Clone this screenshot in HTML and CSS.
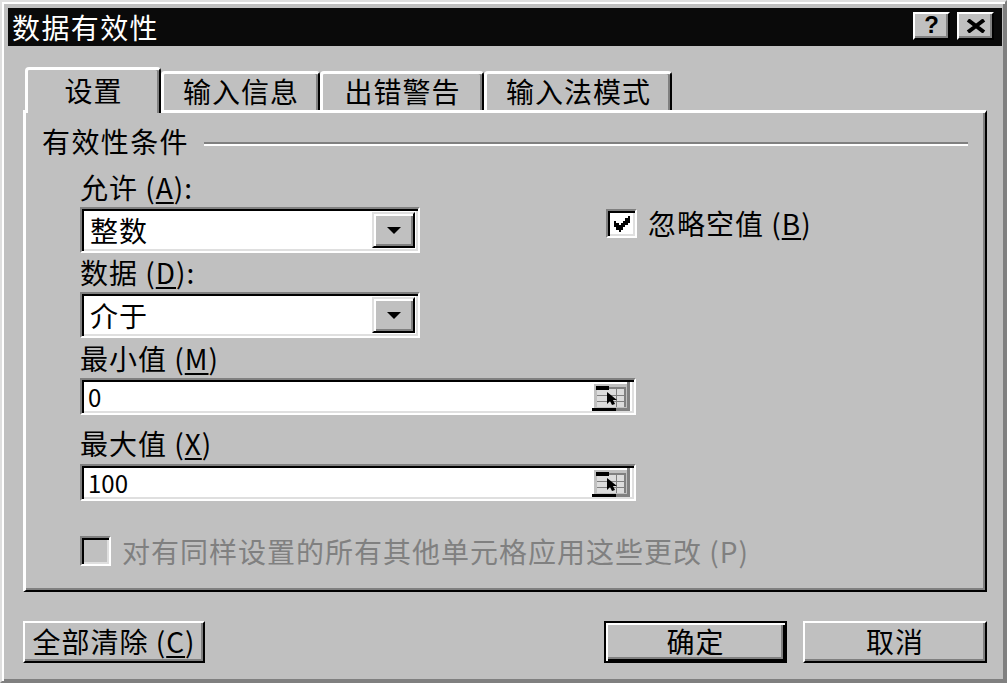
FILE: index.html
```html
<!DOCTYPE html>
<html lang="zh-CN">
<head>
<meta charset="utf-8">
<title>数据有效性</title>
<link rel="stylesheet" href="styles.css">
</head>
<body>
<div class="window">
  <div class="titlebar">
    <span class="title">数据有效性</span>
    <div class="tb-buttons">
      <span class="tb-btn help">?</span>
      <span class="tb-btn close">
        <svg width="22" height="14" viewBox="0 0 22 14"><path d="M3 1 L19 13 M19 1 L3 13" stroke="#000" stroke-width="4" fill="none"/></svg>
      </span>
    </div>
  </div>
  <div class="client">
    <div class="tabs">
      <div class="tab active t1">设置</div>
      <div class="tab t2">输入信息</div>
      <div class="tab t3">出错警告</div>
      <div class="tab t4">输入法模式</div>
    </div>
    <div class="panel">
      <div class="group-head">
        <span class="group-label">有效性条件</span>
        <span class="etch"></span>
      </div>
      <div class="fields">
        <div class="label l1">允许 (<u>A</u>):</div>
        <div class="row r1">
          <div class="combo">
            <span class="combo-text">整数</span>
            <span class="drop"><i class="tri"></i></span>
          </div>
          <div class="check ignore">
            <span class="box">
              <svg width="18" height="16" viewBox="0 0 7 7" shape-rendering="crispEdges"><path d="M6 0h1v1h-1z M5 1h2v1h-2z M0 2h1v1h-1z M4 2h3v1h-3z M0 3h2v1h-2z M3 3h3v1h-3z M0 4h5v1h-5z M1 5h3v1h-3z M2 6h1v1h-1z" fill="#000"/></svg>
            </span>
            <span class="check-text">忽略空值 (<u>B</u>)</span>
          </div>
        </div>
        <div class="label l2">数据 (<u>D</u>):</div>
        <div class="row r2">
          <div class="combo">
            <span class="combo-text">介于</span>
            <span class="drop"><i class="tri"></i></span>
          </div>
        </div>
        <div class="label l3">最小值 (<u>M</u>)</div>
        <div class="field f1">
          <span class="field-text">0</span>
          <span class="ref">
            <svg width="38" height="29" viewBox="0 0 38 29">
              <rect x="0" y="0" width="38" height="29" fill="#c0c0c0"/>
              <rect x="0" y="0" width="38" height="2" fill="#fff"/>
              <rect x="0" y="0" width="2" height="29" fill="#fff"/>
              <rect x="5" y="5" width="29" height="20" fill="#dcdcdc"/>
              <rect x="16" y="5" width="18" height="2" fill="#808080"/>
              <rect x="5" y="13" width="29" height="1" fill="#808080"/>
              <rect x="5" y="19" width="29" height="1" fill="#808080"/>
              <rect x="24" y="5" width="1" height="20" fill="#808080"/>
              <rect x="32" y="5" width="2" height="20" fill="#808080"/>
              <rect x="4" y="4" width="13" height="4" fill="#000"/>
              <path d="M15 10 L15 22 L18 19 L20 23 L23 22 L21 18 L25 18 Z" fill="#000"/>
              <rect x="0" y="26" width="24" height="3" fill="#000"/>
              <rect x="24" y="26" width="14" height="3" fill="#808080"/>
              <rect x="35" y="0" width="3" height="29" fill="#808080"/>
            </svg>
          </span>
        </div>
        <div class="label l4">最大值 (<u>X</u>)</div>
        <div class="field f2">
          <span class="field-text">100</span>
          <span class="ref">
            <svg width="38" height="29" viewBox="0 0 38 29">
              <rect x="0" y="0" width="38" height="29" fill="#c0c0c0"/>
              <rect x="0" y="0" width="38" height="2" fill="#fff"/>
              <rect x="0" y="0" width="2" height="29" fill="#fff"/>
              <rect x="5" y="5" width="29" height="20" fill="#dcdcdc"/>
              <rect x="16" y="5" width="18" height="2" fill="#808080"/>
              <rect x="5" y="13" width="29" height="1" fill="#808080"/>
              <rect x="5" y="19" width="29" height="1" fill="#808080"/>
              <rect x="24" y="5" width="1" height="20" fill="#808080"/>
              <rect x="32" y="5" width="2" height="20" fill="#808080"/>
              <rect x="4" y="4" width="13" height="4" fill="#000"/>
              <path d="M15 10 L15 22 L18 19 L20 23 L23 22 L21 18 L25 18 Z" fill="#000"/>
              <rect x="0" y="26" width="24" height="3" fill="#000"/>
              <rect x="24" y="26" width="14" height="3" fill="#808080"/>
              <rect x="35" y="0" width="3" height="29" fill="#808080"/>
            </svg>
          </span>
        </div>
        <div class="check apply-all">
          <span class="box disabled"></span>
          <span class="check-text disabled-text">对有同样设置的所有其他单元格应用这些更改 (P)</span>
        </div>
      </div>
    </div>
    <div class="buttons">
      <button class="btn clear">全部清除 (<u>C</u>)</button>
      <div class="btn-pair">
        <button class="btn ok">确定</button>
        <button class="btn cancel">取消</button>
      </div>
    </div>
  </div>
</div>
</body>
</html>
```
FILE: styles.css
```css
* { box-sizing: border-box; }
html, body { margin: 0; padding: 0; }
body {
  background: #c0c0c0;
  font-family: "Noto Sans CJK SC", "Noto Sans", sans-serif;
  font-size: 28px;
  color: #000;
}
u { text-decoration-thickness: 2px; text-underline-offset: 3px; }

.window {
  width: 1007px;
  height: 683px;
  background: #c0c0c0;
  border: 2px solid;
  border-color: #dfdfdf #808080 #808080 #dfdfdf;
  box-shadow: inset 2px 2px #fff, inset -2px -2px #808080;
  padding: 6px 3px 0 6px;
}

.titlebar {
  height: 38px;
  background: #0a0a0a;
  display: flex;
  justify-content: space-between;
  align-items: flex-start;
  padding-left: 4px;
}
.title {
  color: #fff;
  line-height: 38px;
  letter-spacing: 1.4px;
}
.tb-buttons {
  display: flex;
  gap: 7px;
  padding-right: 8px;
  margin-top: 4px;
}
.tb-btn {
  width: 37px;
  height: 28px;
  background: #c0c0c0;
  border: 2px solid;
  border-color: #fff #000 #000 #fff;
  box-shadow: inset -2px -2px #808080;
  display: flex;
  align-items: center;
  justify-content: center;
}
.help {
  font-family: "Liberation Sans", Arial, sans-serif;
  font-weight: bold;
  font-size: 24px;
  line-height: 1;
  padding-bottom: 2px;
}

.client { margin: 0 15px; }

.tabs {
  display: flex;
  align-items: flex-end;
  margin-top: 21px;
  padding-left: 2px;
  height: 43px;
}
.tab {
  height: 39px;
  border-top: 3px solid #fff;
  border-left: 3px solid #fff;
  border-right: 2px solid #000;
  box-shadow: inset -2px 0 #808080;
  border-radius: 4px 4px 0 0;
  display: flex;
  align-items: center;
  justify-content: center;
  letter-spacing: 1px;
  padding-bottom: 2px;
  background: #c0c0c0;
}
.tab.active {
  height: 46px;
  margin-bottom: -3px;
  z-index: 1;
  padding-bottom: 4px;
}
.t1 { width: 136px; }
.t2 { width: 159px; }
.t3 { width: 164px; }
.t4 { width: 188px; }

.panel {
  height: 482px;
  border-style: solid;
  border-width: 3px 2px 2px 3px;
  border-color: #fff #000 #000 #fff;
  box-shadow: inset -2px -2px #808080;
  padding: 12px 15px 0 16px;
}

.group-head {
  display: flex;
  align-items: center;
  height: 32px;
}
.group-label { line-height: 32px; letter-spacing: 1.4px; }
.etch {
  flex: 1;
  height: 4px;
  border-top: 2px solid #808080;
  border-bottom: 2px solid #fff;
  margin-left: 15px;
  margin-top: 6px;
  margin-right: 2px;
}

.fields {
  display: flex;
  flex-direction: column;
  align-items: flex-start;
  padding-left: 38px;
}
.label { line-height: 32px; height: 32px; letter-spacing: 1px; }
.l1 { margin-top: 14px; }
.r1 { margin-top: 4px; }
.l2 { margin-top: 3px; }
.r2 { margin-top: 4px; }
.l3 { margin-top: 4px; }
.f1 { margin-top: 4px; }
.l4 { margin-top: 12px; }
.f2 { margin-top: 5px; }

.row { display: flex; align-items: flex-start; }

.combo, .field {
  background: #fff;
  border: 2px solid;
  border-color: #808080 #fff #fff #808080;
  box-shadow: inset 2px 2px #000, inset -2px -2px #dfdfdf;
  display: flex;
  align-items: center;
}
.combo {
  width: 340px;
  height: 46px;
  padding: 3px 3px 3px 2px;
}
.combo-text {
  flex: 1;
  padding-left: 6px;
  letter-spacing: 1px;
  line-height: 36px;
}
.drop {
  width: 43px;
  height: 36px;
  background: #c0c0c0;
  border: 2px solid;
  border-color: #dfdfdf #000 #000 #dfdfdf;
  box-shadow: inset 2px 2px #fff, inset -2px -2px #808080;
  display: flex;
  align-items: center;
  justify-content: center;
}
.tri {
  width: 0;
  height: 0;
  border-left: 7px solid transparent;
  border-right: 7px solid transparent;
  border-top: 7px solid #000;
}

.field {
  width: 556px;
  height: 37px;
  padding: 2px 4px 2px 2px;
}
.field-text {
  flex: 1;
  padding-left: 4px;
  font-size: 24px;
  line-height: 29px;
}
.ref { width: 38px; height: 29px; display: block; }
.ref svg { display: block; }

.check {
  display: flex;
  align-items: center;
}
.ignore {
  margin-left: 186px;
  height: 32px;
}
.box {
  width: 31px;
  height: 29px;
  background: #fff;
  border: 2px solid;
  border-color: #808080 #fff #fff #808080;
  box-shadow: inset 2px 2px #000, inset -2px -2px #dfdfdf;
  display: flex;
  align-items: center;
  justify-content: center;
  padding: 1px 0 0 1px;
}
.check-text {
  margin-left: 11px;
  letter-spacing: 1px;
  line-height: 32px;
}
.apply-all { margin-top: 35px; height: 30px; }
.box.disabled { background: #c0c0c0; height: 30px; }
.disabled-text { color: #808080; }

.buttons {
  display: flex;
  justify-content: space-between;
  margin-top: 29px;
}
.btn-pair { display: flex; gap: 16px; }
.btn {
  font-family: inherit;
  font-size: 28px;
  letter-spacing: 1px;
  color: #000;
  height: 42px;
  padding: 0 0 2px 0;
  margin: 0;
  background: #c0c0c0;
  border: 2px solid;
  border-color: #fff #000 #000 #fff;
  box-shadow: inset -2px -2px #808080;
  display: flex;
  align-items: center;
  justify-content: center;
}
.clear { width: 182px; }
.ok {
  width: 183px;
  border-color: #000;
  box-shadow: inset 2px 2px #fff, inset -2px -2px #000, inset -4px -4px #808080;
}
.cancel { width: 184px; }
```
